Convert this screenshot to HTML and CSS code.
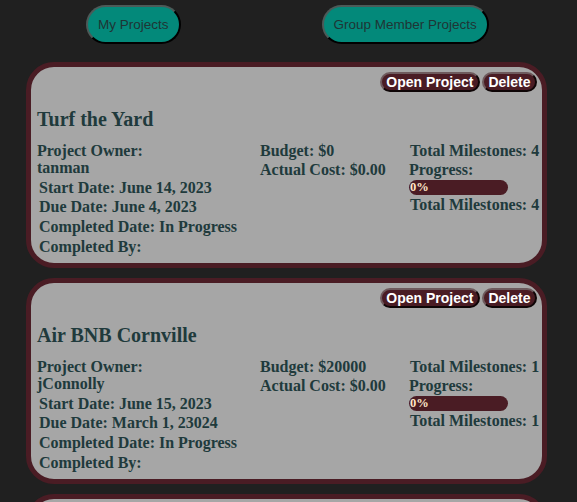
FILE: index.html
```html
<!DOCTYPE html>
<html>
<head>
<meta charset="utf-8">
<link rel="stylesheet" href="styles.css">
</head>
<body>
<nav class="tabs">
  <button class="tab">My Projects</button>
  <button class="tab">Group Member Projects</button>
</nav>
<main class="list">
  <section class="card">
    <div class="actions">
      <button class="act">Open Project</button>
      <button class="act">Delete</button>
    </div>
    <h2 class="title">Turf the Yard</h2>
    <div class="info">
      <div class="col col-main">
        <div class="owner-label">Project Owner:</div>
        <div class="owner-name">tanman</div>
        <div class="line">Start Date: June 14, 2023</div>
        <div class="line">Due Date: June 4, 2023</div>
        <div class="line">Completed Date: In Progress</div>
        <div class="line">Completed By:</div>
      </div>
      <div class="col col-cost">
        <div class="row">Budget: $0</div>
        <div class="row cost">Actual Cost: $0.00</div>
      </div>
      <div class="col col-prog">
        <div class="row ind">Total Milestones: 4</div>
        <div class="row prog">Progress:</div>
        <div class="bar"><span class="bar-text">0%</span></div>
        <div class="row ind">Total Milestones: 4</div>
      </div>
    </div>
  </section>
  <section class="card">
    <div class="actions">
      <button class="act">Open Project</button>
      <button class="act">Delete</button>
    </div>
    <h2 class="title">Air BNB Cornville</h2>
    <div class="info">
      <div class="col col-main">
        <div class="owner-label">Project Owner:</div>
        <div class="owner-name">jConnolly</div>
        <div class="line">Start Date: June 15, 2023</div>
        <div class="line">Due Date: March 1, 23024</div>
        <div class="line">Completed Date: In Progress</div>
        <div class="line">Completed By:</div>
      </div>
      <div class="col col-cost">
        <div class="row">Budget: $20000</div>
        <div class="row cost">Actual Cost: $0.00</div>
      </div>
      <div class="col col-prog">
        <div class="row ind">Total Milestones: 1</div>
        <div class="row prog">Progress:</div>
        <div class="bar"><span class="bar-text">0%</span></div>
        <div class="row ind">Total Milestones: 1</div>
      </div>
    </div>
  </section>
  <section class="card"></section>
</main>
</body>
</html>
```
FILE: styles.css
```css
html, body {
  margin: 0;
  padding: 0;
  background: #202020;
  overflow: hidden;
}
body {
  font-family: "Liberation Serif", "Times New Roman", serif;
  color: #203a3c;
}
.tabs {
  display: flex;
  gap: 141px;
  padding: 5px 0 0 86px;
  height: 62px;
  box-sizing: border-box;
}
.tab {
  font-family: "Liberation Sans", Arial, sans-serif;
  font-size: 13.5px;
  color: #1f3535;
  background: #03897a;
  height: 39px;
  padding: 0 10px;
  border: 2px solid;
  border-color: #4c5a58 #000 #000 #4c5a58;
  border-radius: 20px;
  cursor: pointer;
}
.list {
  display: flex;
  flex-direction: column;
  gap: 10px;
}
.card {
  margin: 0 30px 0 26px;
  background: #a6a6a6;
  border: 5px solid #4a1c24;
  border-radius: 28px;
  padding: 5px 5px 8px 6px;
  height: 206px;
  box-sizing: border-box;
  flex-shrink: 0;
}
.actions {
  display: flex;
  justify-content: flex-end;
  gap: 2px;
}
.act {
  font-family: "Liberation Sans", Arial, sans-serif;
  font-weight: bold;
  font-size: 14px;
  color: #fff;
  background: #4a1c24;
  height: 20px;
  padding: 0 4.5px;
  border: 2px solid;
  border-color: #6e5a5d #0e0506 #0e0506 #6e5a5d;
  border-radius: 10px;
  line-height: 16px;
}
.title {
  margin: 16px 0 0 0;
  font-size: 20px;
  font-weight: bold;
  line-height: 22px;
  height: 34px;
}
.info {
  display: grid;
  grid-template-columns: 223px 149px 1fr;
  font-size: 16px;
  font-weight: bold;
  white-space: nowrap;
}
.owner-label { line-height: 17px; }
.owner-name { line-height: 18.5px; }
.line { line-height: 19.7px; padding-left: 2px; }
.row { line-height: 18px; }
.row.cost { line-height: 19px; }
.row.prog { line-height: 19px; }
.ind { padding-left: 1px; }
.bar {
  width: 99px;
  height: 15px;
  background: #4a1c24;
  border-radius: 8px;
  margin: 1px 0 1px 0;
  display: flex;
  align-items: center;
}
.bar-text {
  color: #ffe6c8;
  font-size: 12.5px;
  font-weight: bold;
  padding-left: 1px;
  line-height: 15px;
}
```
